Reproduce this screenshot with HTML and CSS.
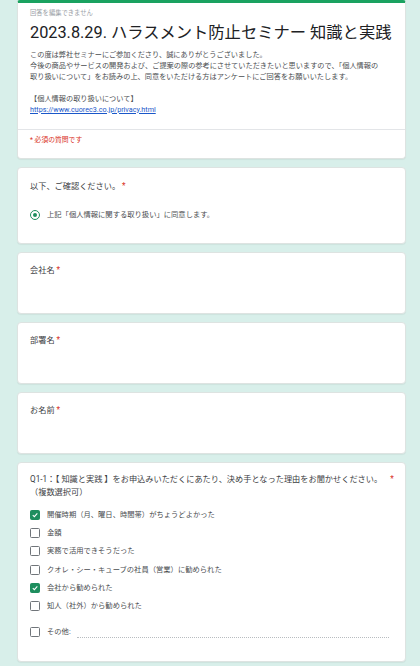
FILE: index.html
```html
<!DOCTYPE html>
<html lang="ja">
<head>
<meta charset="utf-8">
<title>2023.8.29. ハラスメント防止セミナー 知識と実践</title>
<link rel="stylesheet" href="styles.css">
</head>
<body>
<main class="form">
  <section class="card card-top">
    <div class="head">
      <div class="noedit">回答を編集できません</div>
      <h1 class="title">2023.8.29. ハラスメント防止セミナー 知識と実践</h1>
      <div class="desc">
        この度は弊社セミナーにご参加くださり、誠にありがとうございました。<br>
        今後の商品やサービスの開発および、ご提案の際の参考にさせていただきたいと思いますので、「個人情報の<br>
        取り扱いについて」をお読みの上、同意をいただける方はアンケートにご回答をお願いいたします。<br>
        <br>
        【個人情報の取り扱いについて】<br>
        <a class="link" href="#">https://www.cuorec3.co.jp/privacy.html</a>
      </div>
    </div>
    <div class="foot">* 必須の質問です</div>
  </section>

  <section class="card card-consent">
    <div class="q">以下、ご確認ください。 <span class="req">*</span></div>
    <div class="option radio-row">
      <span class="radio"><span class="dot"></span></span>
      <span class="label">上記「個人情報に関する取り扱い」に同意します。</span>
    </div>
  </section>

  <section class="card card-text">
    <div class="q">会社名 <span class="req">*</span></div>
  </section>

  <section class="card card-text">
    <div class="q">部署名 <span class="req">*</span></div>
  </section>

  <section class="card card-text">
    <div class="q">お名前 <span class="req">*</span></div>
  </section>

  <section class="card card-check">
    <div class="q q-multi">
      <span class="qtext">Q1-1：【 知識と実践 】をお申込みいただくにあたり、決め手となった理由をお聞かせください。<br>（複数選択可）</span>
      <span class="req">*</span>
    </div>
    <div class="options">
      <div class="option"><span class="box checked"><svg viewBox="0 0 10 10" width="10" height="10"><path d="M2.2 5.2 L4.2 7.1 L7.9 3" fill="none" stroke="#fff" stroke-width="1.3"/></svg></span><span class="label">開催時期（月、曜日、時間帯）がちょうどよかった</span></div>
      <div class="option"><span class="box"></span><span class="label">金額</span></div>
      <div class="option"><span class="box"></span><span class="label">実務で活用できそうだった</span></div>
      <div class="option"><span class="box"></span><span class="label">クオレ・シー・キューブの社員（営業）に勧められた</span></div>
      <div class="option"><span class="box checked"><svg viewBox="0 0 10 10" width="10" height="10"><path d="M2.2 5.2 L4.2 7.1 L7.9 3" fill="none" stroke="#fff" stroke-width="1.3"/></svg></span><span class="label">会社から勧められた</span></div>
      <div class="option"><span class="box"></span><span class="label">知人（社外）から勧められた</span></div>
      <div class="option other"><span class="box"></span><span class="label">その他:</span><span class="other-line"></span></div>
    </div>
  </section>
</main>
</body>
</html>
```

FILE: styles.css
```css
html, body {
  margin: 0;
  padding: 0;
}
body {
  background: #d8efea;
  font-family: Roboto, "Noto Sans CJK JP", sans-serif;
  color: #3c4043;
  width: 420px;
  height: 666px;
  overflow: hidden;
}
.form {
  width: 389px;
  margin-left: 17px;
  display: flex;
  flex-direction: column;
  gap: 8px;
}
.card {
  background: #fff;
  border: 1px solid #dde3e1;
  border-radius: 4px;
  box-sizing: border-box;
  box-shadow: 0 1px 1px rgba(0, 0, 0, 0.05);
}
.card-top {
  border-top: 3px solid #1aa260;
  border-top-left-radius: 3px;
  border-top-right-radius: 3px;
  height: 159px;
  display: flex;
  flex-direction: column;
}
.head {
  padding: 5px 12px 0;
  height: 127px;
  box-sizing: border-box;
  border-bottom: 1px solid #e3e5e8;
}
.noedit {
  font-size: 6.3px;
  line-height: 10px;
  color: #9aa0a6;
}
.title {
  margin: 3px 0 0;
  font-size: 16.3px;
  font-weight: 400;
  line-height: 24px;
  color: #202124;
  white-space: nowrap;
}
.desc {
  margin-top: 3.5px;
  font-size: 7.2px;
  line-height: 11px;
  color: #4a4d50;
  white-space: nowrap;
}
.link {
  color: #1a57c9;
  text-decoration: underline;
}
.foot {
  padding: 6px 12px 0;
  font-size: 6.8px;
  line-height: 9px;
  color: #d93025;
}
.q {
  font-size: 8.2px;
  line-height: 12px;
  color: #3c4043;
  white-space: nowrap;
}
.req {
  color: #d93025;
}
.card-consent {
  height: 77px;
  padding: 12px 12px 0;
}
.option {
  display: flex;
  align-items: center;
  height: 18.2px;
}
.radio-row {
  margin-top: 17px;
  height: 12px;
}
.radio {
  width: 10px;
  height: 10px;
  border: 1.4px solid #1e8e5e;
  border-radius: 50%;
  box-sizing: border-box;
  display: flex;
  align-items: center;
  justify-content: center;
  flex: none;
}
.dot {
  width: 4.6px;
  height: 4.6px;
  border-radius: 50%;
  background: #1e8e5e;
}
.label {
  margin-left: 7px;
  font-size: 7.3px;
  line-height: 12px;
  color: #4a4d50;
  white-space: nowrap;
}
.card-text {
  height: 62px;
  padding: 11px 12px 0;
}
.card-check {
  height: 200px;
  padding: 10px 12px 0;
}
.q-multi {
  display: flex;
  align-items: flex-start;
  line-height: 13px;
}
.q-multi .req {
  margin-left: 8px;
}
.options {
  margin-top: 7px;
}
.box {
  width: 10px;
  height: 10px;
  border: 1px solid #70757a;
  border-radius: 1.5px;
  box-sizing: border-box;
  flex: none;
  display: flex;
  align-items: center;
  justify-content: center;
}
.box svg {
  display: block;
}
.box.checked {
  background: #1e8e5e;
  border-color: #1e8e5e;
}
.other {
  margin-top: 8px;
}
.other-line {
  flex: 1;
  margin-left: 6px;
  margin-right: 4px;
  align-self: flex-end;
  margin-bottom: 3.5px;
  border-bottom: 1px dotted #b8bcc0;
}
```
